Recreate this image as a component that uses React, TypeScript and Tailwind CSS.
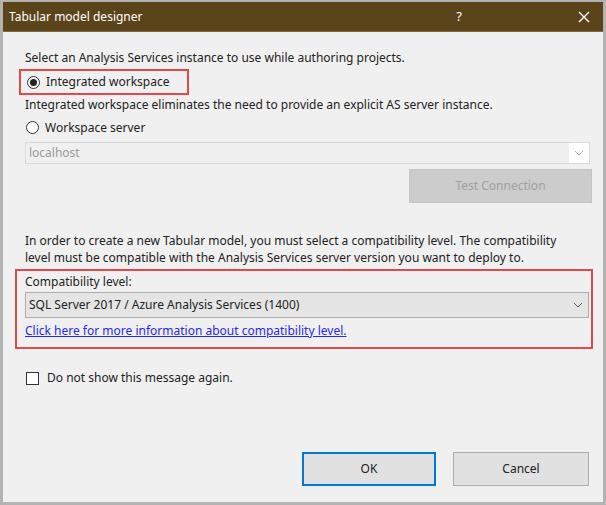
import React from "react";

function Radio({ checked }: { checked: boolean }) {
  return (
    <span className="w-[13px] h-[13px] rounded-full border border-[#333] bg-white flex items-center justify-center shrink-0">
      {checked && <span className="w-[7px] h-[7px] rounded-full bg-[#222]" />}
    </span>
  );
}

function Chevron({ color }: { color: string }) {
  return (
    <svg width="10" height="6" viewBox="0 0 10 6" fill="none">
      <path d="M1 1 L5 5 L9 1" stroke={color} strokeWidth="1" />
    </svg>
  );
}

export default function App() {
  return (
    <div
      className="w-[606px] h-[505px] bg-[#b3b3b3] pt-[2px] pl-[3px] pr-[3px] pb-[3px] text-[12px] text-[#222]"
      style={{ fontFamily: '"Noto Sans", "Open Sans", sans-serif' }}
    >
      <div className="w-full h-full bg-[#f0f0f0] flex flex-col">
        <div className="h-[30px] bg-[#5b4419] flex items-center text-white border-b border-[#7a6a4a] shrink-0">
          <span className="ml-[6px] text-[12px]">Tabular model designer</span>
          <span className="ml-auto mr-[116px] text-[13px]">?</span>
          <svg width="12" height="12" viewBox="0 0 12 12" className="mr-[13px]">
            <path d="M1 1 L11 11 M11 1 L1 11" stroke="white" strokeWidth="1.4" />
          </svg>
        </div>
        <div className="flex flex-col pl-[22px] pr-[13px] pt-[17px]">
          <div className="leading-[17px]">Select an Analysis Services instance to use while authoring projects.</div>
          <div className="mt-[3px] -ml-[6px] w-[170px] h-[26px] border-2 border-[#e04a4a] flex items-center gap-[6px] pl-[6px]">
            <Radio checked />
            <span>Integrated workspace</span>
          </div>
          <div className="mt-[1px] leading-[17px]">
            Integrated workspace eliminates the need to provide an explicit AS server instance.
          </div>
          <div className="mt-[6px] flex items-center gap-[6px] pl-[1px] leading-[17px]">
            <Radio checked={false} />
            <span>Workspace server</span>
          </div>
          <div className="mt-[6px] h-[22px] border border-[#d9d9d9] bg-white flex">
            <div className="flex-1 bg-[#f0f0f0] flex items-center pl-[3px] text-[#9a9a9a]">localhost</div>
            <div className="w-[20px] flex items-center justify-center">
              <Chevron color="#b0b0b0" />
            </div>
          </div>
          <div className="flex justify-end mt-[5px] -mr-[2px]">
            <div className="w-[183px] h-[34px] bg-[#cccccc] border border-[#c4c4c4] flex items-center justify-center text-[#a0a0a0]">
              Test Connection
            </div>
          </div>
          <div className="mt-[29px] leading-[17px]">
            In order to create a new Tabular model, you must select a compatibility level. The compatibility
            <br />
            level must be compatible with the Analysis Services server version you want to deploy to.
          </div>
          <div className="mt-[3px] -ml-[10px] -mr-[3px] h-[80px] border-2 border-[#e04a4a] pl-[8px] pr-[2px] pt-[2px] flex flex-col">
            <div className="leading-[17px]">Compatibility level:</div>
            <div className="mt-[2px] h-[26px] border border-[#adadad] bg-[#e5e5e5] flex items-center pl-[3px]">
              <span className="flex-1">SQL Server 2017 / Azure Analysis Services (1400)</span>
              <span className="w-[20px] flex items-center justify-center">
                <Chevron color="#555" />
              </span>
            </div>
            <div className="mt-[4px] text-[#2a2aee] underline leading-[17px]">
              Click here for more information about compatibility level.
            </div>
          </div>
          <div className="mt-[20px] flex items-center gap-[8px] pl-[1px]">
            <span className="w-[13px] h-[13px] border border-[#333] bg-white shrink-0" />
            <span>Do not show this message again.</span>
          </div>
          <div className="mt-[65px] flex justify-end gap-[17px] mr-[1px]">
            <div className="w-[134px] h-[34px] bg-[#e1e1e1] border-2 border-[#0078d7] flex items-center justify-center">
              OK
            </div>
            <div className="w-[136px] h-[34px] bg-[#e1e1e1] border border-[#adadad] flex items-center justify-center">
              Cancel
            </div>
          </div>
        </div>
      </div>
    </div>
  );
}
